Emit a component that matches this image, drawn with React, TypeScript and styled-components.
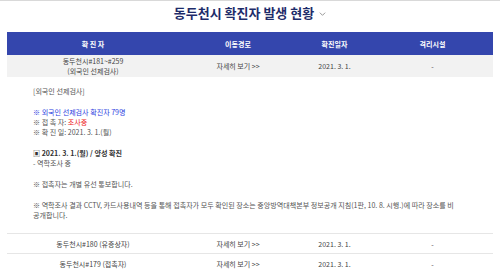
import React from "react";
import styled, { createGlobalStyle } from "styled-components";

const GlobalStyle = createGlobalStyle`
  html, body {
    margin: 0;
    padding: 0;
    background: #fff;
  }
  body {
    font-family: "Noto Sans CJK KR", "Noto Sans", sans-serif;
    border-top: 1px solid #d9d9d9;
  }
`;

type Row = { name: string; date: string };

const rows: Row[] = [
  { name: "동두천시#180 (유증상자)", date: "2021. 3. 1." },
  { name: "동두천시#179 (접촉자)", date: "2021. 3. 1." },
];

export default function App() {
  return (
    <Page>
      <GlobalStyle />
      <Title>
        동두천시 확진자 발생 현황
        <Chevron viewBox="0 0 10 6">
          <path d="M1 1l4 4 4-4" fill="none" stroke="#666" strokeWidth="1" />
        </Chevron>
      </Title>
      <Table>
        <HeadRow>
          <Cell>확 진 자</Cell>
          <Cell>이동경로</Cell>
          <Cell>확진일자</Cell>
          <Cell>격리시설</Cell>
        </HeadRow>
        <BodyRow $open>
          <Cell>
            동두천시#181~#259
            <br />
            (외국인 선제검사)
          </Cell>
          <Cell>자세히 보기 &gt;&gt;</Cell>
          <Cell>2021. 3. 1.</Cell>
          <Cell>-</Cell>
        </BodyRow>
        <Detail>
          <Line>[외국인 선제검사]</Line>
          <Gap />
          <Line $color="#2b3de0">※ 외국인 선제검사 확진자 79명</Line>
          <Line>
            ※ 접 촉 자: <Red>조사중</Red>
          </Line>
          <Line>※ 확 진 일: 2021. 3. 1.(월)</Line>
          <Gap />
          <Line $bold $color="#333">▣ 2021. 3. 1.(월) / 양성 확진</Line>
          <Line>- 역학조사 중</Line>
          <Gap />
          <Line>※ 접촉자는 개별 유선 통보합니다.</Line>
          <Gap />
          <Line>
            ※ 역학조사 결과 CCTV, 카드사용내역 등을 통해 접촉자가 모두 확인된 장소는
            중앙방역대책본부 정보공개 지침(1판, 10. 8. 시행.)에 따라 장소를 비
            <br />
            공개합니다.
          </Line>
        </Detail>
        {rows.map((r) => (
          <BodyRow key={r.name}>
            <Cell>{r.name}</Cell>
            <Cell>자세히 보기 &gt;&gt;</Cell>
            <Cell>{r.date}</Cell>
            <Cell>-</Cell>
          </BodyRow>
        ))}
      </Table>
    </Page>
  );
}

const Page = styled.div`
  padding: 0 7px;
`;

const Title = styled.h2`
  margin: 0;
  height: 31px;
  box-sizing: border-box;
  padding-top: 3px;
  display: flex;
  align-items: flex-start;
  justify-content: center;
  gap: 5px;
  font-size: 13px;
  line-height: 18px;
  font-weight: 700;
  color: #1e2c6a;
`;

const Chevron = styled.svg`
  width: 7px;
  height: 4px;
  margin-top: 8px;
`;

const Table = styled.div`
  display: flex;
  flex-direction: column;
`;

const columns = "172px 118px 75px 121px";

const HeadRow = styled.div`
  display: grid;
  grid-template-columns: ${columns};
  height: 23px;
  align-items: center;
  background: #3446ad;
  color: #fff;
  font-size: 7px;
  font-weight: 700;
`;

const BodyRow = styled.div<{ $open?: boolean }>`
  display: grid;
  grid-template-columns: ${columns};
  box-sizing: border-box;
  height: ${(p) => (p.$open ? "22px" : "20px")};
  align-items: center;
  background: ${(p) => (p.$open ? "#f2f2f2" : "#fff")};
  border-top: ${(p) => (p.$open ? "none" : "1px solid #e6e6e6")};
  color: #444;
  font-size: 7px;
  line-height: 10px;
`;

const Cell = styled.div`
  text-align: center;
`;

const Detail = styled.div`
  padding: 9px 10px 13px 26px;
  font-size: 7.05px;
  line-height: 10px;
  color: #555;
  white-space: nowrap;
`;

const Line = styled.div<{ $bold?: boolean; $color?: string }>`
  font-weight: ${(p) => (p.$bold ? 700 : 400)};
  color: ${(p) => p.$color ?? "inherit"};
`;

const Gap = styled.div`
  height: 11px;
`;

const Red = styled.span`
  color: #ee2222;
`;
